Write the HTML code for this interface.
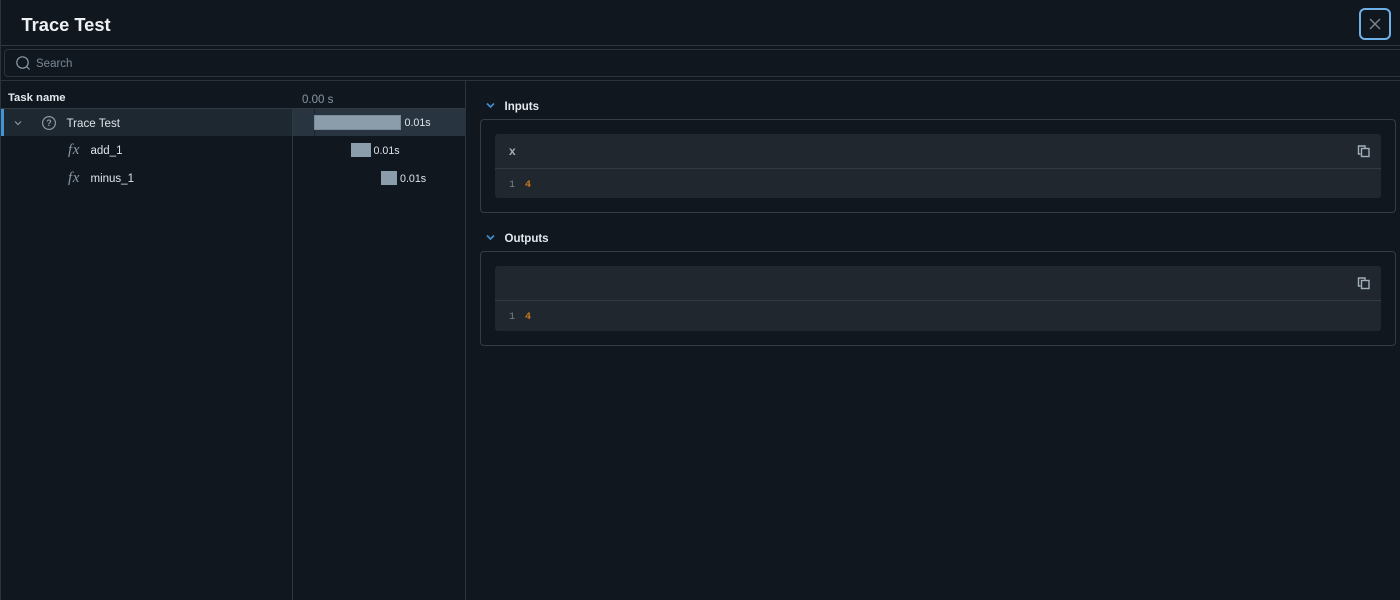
<!DOCTYPE html>
<html><head><meta charset="utf-8">
<style>
html,body{margin:0;padding:0;width:1400px;height:600px;overflow:hidden;background:#11171f}
body{font-family:"Liberation Sans",sans-serif;position:relative;color:#e3e8ed}
.a{position:absolute;white-space:nowrap;box-sizing:border-box}
.mono{font-family:"Liberation Mono",monospace}
</style></head><body>
<div class="a" style="left:0;top:0;width:1px;height:600px;background:#2b343c"></div>
<div class="a" style="left:21.5px;top:13px;font-size:18.3px;line-height:24px;font-weight:700;color:#eef1f4">Trace Test</div>
<div class="a" style="left:1359px;top:8px;width:32px;height:32px;border:2px solid #6fb1e6;border-radius:6px"></div>
<svg class="a" style="left:1369px;top:18px" width="12" height="12" viewBox="0 0 12 12"><path d="M1 1L11 11M11 1L1 11" stroke="#7d8791" stroke-width="1.3" fill="none"/></svg>
<div class="a" style="left:1px;top:45px;width:1399px;height:1px;background:#2f383f"></div>
<div class="a" style="left:4px;top:49px;width:1410px;height:28px;border:1px solid #2b343c;border-radius:4px"></div>
<svg class="a" style="left:15px;top:55px" width="16" height="16" viewBox="0 0 16 16"><circle cx="7.5" cy="7.5" r="5.7" stroke="#8b9aa8" stroke-width="1.2" fill="none"/><path d="M11.6 11.6L14.5 14.5" stroke="#8b9aa8" stroke-width="1.2"/></svg>
<div class="a" style="left:36px;top:57px;font-size:11.5px;line-height:14px;color:#788896">Search</div>
<div class="a" style="left:1px;top:80px;width:1399px;height:1px;background:#2b343c"></div>

<div class="a" style="left:8px;top:91px;font-size:11.3px;line-height:14px;font-weight:700;color:#e3e8ed">Task name</div>
<div class="a" style="left:302px;top:93px;font-size:11.5px;line-height:14px;color:#8896a3">0.00 s</div>
<div class="a" style="left:465px;top:81px;width:1px;height:519px;background:#2b343c"></div>
<div class="a" style="left:1px;top:108px;width:465px;height:1px;background:#2f3a44"></div>
<div class="a" style="left:1px;top:109px;width:291px;height:27px;background:#1e2831"></div>
<div class="a" style="left:293px;top:109px;width:173px;height:27px;background:#28343f"></div>
<div class="a" style="left:1px;top:109px;width:3px;height:27px;background:#4296d8"></div>
<div class="a" style="left:292px;top:108px;width:1px;height:492px;background:#2f383f"></div>
<div class="a" style="left:314px;top:109px;width:1px;height:27px;background:#1a222a"></div>

<svg class="a" style="left:14px;top:119px" width="8" height="8" viewBox="0 0 8 8"><path d="M1 2.5L4 5.5L7 2.5" stroke="#8796a3" stroke-width="1.2" fill="none"/></svg>
<svg class="a" style="left:41px;top:114.5px" width="16" height="16" viewBox="0 0 16 16"><circle cx="8" cy="8" r="6.4" stroke="#8b98a4" stroke-width="1.2" fill="none"/><text x="8" y="11" font-size="9" font-weight="700" font-family="Liberation Sans" fill="#8b98a4" text-anchor="middle">?</text></svg>
<div class="a" style="left:66.5px;top:117px;font-size:11.6px;line-height:14px;color:#dfe4e9">Trace Test</div>
<div class="a" style="left:68px;top:143px;font-family:'Liberation Serif',serif;font-style:italic;font-size:15px;letter-spacing:.6px;line-height:14px;color:#8b98a4">fx</div>
<div class="a" style="left:90.5px;top:144px;font-size:11.5px;line-height:14px;color:#dfe4e9">add_1</div>
<div class="a" style="left:68px;top:171px;font-family:'Liberation Serif',serif;font-style:italic;font-size:15px;letter-spacing:.6px;line-height:14px;color:#8b98a4">fx</div>
<div class="a" style="left:90.5px;top:172px;font-size:11.5px;line-height:14px;color:#dfe4e9">minus_1</div>

<div class="a" style="left:314px;top:115px;width:87px;height:15px;background:#8b9cab;border:1px solid #7a8c9c"></div>
<div class="a" style="left:404.5px;top:116px;font-size:10.7px;line-height:14px;color:#dfe4e9">0.01s</div>
<div class="a" style="left:351px;top:143px;width:20px;height:14px;background:#8b9cab"></div>
<div class="a" style="left:373.5px;top:144px;font-size:10.7px;line-height:14px;color:#dfe4e9">0.01s</div>
<div class="a" style="left:381px;top:171px;width:16px;height:14px;background:#8b9cab"></div>
<div class="a" style="left:400px;top:172px;font-size:10.7px;line-height:14px;color:#dfe4e9">0.01s</div>

<svg class="a" style="left:486px;top:102px" width="9" height="7" viewBox="0 0 9 7"><path d="M1 1.5L4.5 5L8 1.5" stroke="#3f8ccb" stroke-width="1.7" fill="none"/></svg>
<div class="a" style="left:504.5px;top:100px;font-size:11.5px;line-height:14px;font-weight:700;color:#e3e8ed">Inputs</div>
<div class="a" style="left:480px;top:119px;width:916px;height:94px;border:1px solid #333d45;border-radius:4px"></div>
<div class="a" style="left:495px;top:134px;width:886px;height:64px;background:#20272e;border-radius:3px"></div>
<div class="a" style="left:495px;top:168px;width:886px;height:1px;background:#323b43"></div>
<div class="a" style="left:509px;top:144px;font-size:12px;line-height:14px;font-weight:700;color:#a3afba">x</div>
<div class="a mono" style="left:509px;top:179px;font-size:10px;line-height:14px;color:#78828b">1</div>
<div class="a mono" style="left:525px;top:179px;font-size:10px;line-height:14px;font-weight:700;color:#c9781e">4</div>
<svg class="a" style="left:1357px;top:144px" width="13" height="14" viewBox="0 0 13 14"><path d="M3.5 10H1.5V2H8V4" stroke="#a0afbc" stroke-width="1.4" fill="none"/><rect x="4.5" y="4.5" width="7.5" height="8" stroke="#a0afbc" stroke-width="1.4" fill="none"/></svg>

<svg class="a" style="left:486px;top:234px" width="9" height="7" viewBox="0 0 9 7"><path d="M1 1.5L4.5 5L8 1.5" stroke="#3f8ccb" stroke-width="1.7" fill="none"/></svg>
<div class="a" style="left:504.5px;top:232px;font-size:11.5px;line-height:14px;font-weight:700;color:#e3e8ed">Outputs</div>
<div class="a" style="left:480px;top:251px;width:916px;height:95px;border:1px solid #333d45;border-radius:4px"></div>
<div class="a" style="left:495px;top:266px;width:886px;height:65px;background:#20272e;border-radius:3px"></div>
<div class="a" style="left:495px;top:300px;width:886px;height:1px;background:#323b43"></div>
<div class="a mono" style="left:509px;top:311px;font-size:10px;line-height:14px;color:#78828b">1</div>
<div class="a mono" style="left:525px;top:311px;font-size:10px;line-height:14px;font-weight:700;color:#c9781e">4</div>
<svg class="a" style="left:1357px;top:276px" width="13" height="14" viewBox="0 0 13 14"><path d="M3.5 10H1.5V2H8V4" stroke="#a0afbc" stroke-width="1.4" fill="none"/><rect x="4.5" y="4.5" width="7.5" height="8" stroke="#a0afbc" stroke-width="1.4" fill="none"/></svg>
</body></html>
